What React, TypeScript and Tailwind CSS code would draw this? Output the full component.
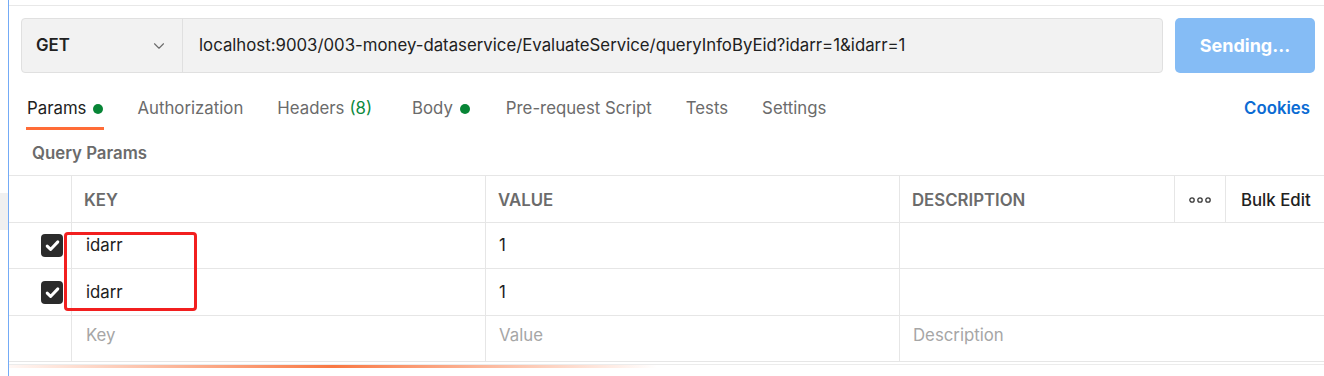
import { ChevronDown } from "lucide-react";

const font = { fontFamily: "Inter, 'Noto Sans', sans-serif" };

const tabs = [
  { label: "Params", dot: true, active: true, pad: "" },
  { label: "Authorization", pad: "" },
  { label: "Headers", count: "(8)", pad: "pr-[6px]" },
  { label: "Body", dot: true, pad: "pr-[2px]" },
  { label: "Pre-request Script", pad: "" },
  { label: "Tests", pad: "" },
  { label: "Settings", pad: "" }
];

const rows = [
  { key: "idarr", value: "1", on: true, h: "h-[46px]" },
  { key: "idarr", value: "1", on: true, h: "h-[47px]" }
];

const cols = "grid grid-cols-[63px_414px_414px_275px_51px_1fr]";

function Check() {
  return (
    <div className="grid h-[23px] w-[22px] place-items-center rounded-[4px] bg-[#2b2b2b]">
      <svg viewBox="0 0 16 16" className="h-[17px] w-[17px]" fill="none" stroke="white" strokeWidth="2.8" strokeLinecap="round" strokeLinejoin="round">
        <path d="M3 8.6l3.2 3.1L13 4.6" />
      </svg>
    </div>
  );
}

export default function App() {
  return (
    <div className="flex h-[376px] w-[1324px] overflow-hidden bg-white text-[16.8px] text-[#212121]" style={font}>
      <div className="w-[8px] shrink-0 pt-[193px]">
        <div className="h-[37px] bg-[#f0f0f0]" />
      </div>
      <main className="relative flex-1 border-l border-[#74abf6]">
        <div className="h-[5px]" />
        <div className="border-t border-[#e8e8e8] pl-3 pr-[9px] pt-[12px]">
          <div className="flex h-[55px] gap-3">
            <div className="flex flex-1 rounded-[4px] border border-[#e0e0e0] bg-[#f2f2f2]">
              <div className="flex w-[161px] items-center justify-between border-r border-[#e0e0e0] pl-[14px] pr-[14px]">
                <span className="font-semibold">GET</span>
                <ChevronDown className="h-[18px] w-[18px] text-[#6b6b6b]" strokeWidth={1.5} />
              </div>
              <div className="flex items-center pl-[16px]">localhost:9003/003-money-dataservice/EvaluateService/queryInfoByEid?idarr=1&amp;idarr=1</div>
            </div>
            <div className="grid w-[140px] place-items-center rounded-[5px] bg-[#85bcf5] text-[18px] font-bold text-white">Sending...</div>
          </div>
        </div>

        <div className="flex h-[57px] items-start justify-between pl-[18px] pr-[14px]">
          <div className="flex h-full items-start gap-[34px]">
            {tabs.map((t) => (
              <div key={t.label} className={`relative flex h-full items-start pt-[23px] leading-[25px] ${t.pad}`}>
                <span className={t.active ? "text-[#212121]" : "text-[#6b6b6b]"}>{t.label}</span>
                {t.count && <span className="ml-[5px] text-[#0b8a3d]">{t.count}</span>}
                {t.dot && <span className="ml-[7px] mt-[8px] h-[10px] w-[10px] rounded-full bg-[#078536]" />}
                {t.active && <span className="absolute left-[-1px] right-[-1px] top-[54px] h-[3px] bg-[#ff6c37]" />}
              </div>
            ))}
          </div>
          <span className="pt-[23px] font-semibold leading-[25px] text-[#0b6bd3]">Cookies</span>
        </div>

        <div className="flex h-[45px] items-center pl-[23px] pt-[2px] font-semibold text-[#6b6b6b]">Query Params</div>

        <div className="border-t border-[#e6e6e6]">
          <div className={`${cols} h-[47px] border-b border-[#e6e6e6] font-semibold text-[#6b6b6b]`}>
            <div className="border-r border-[#e6e6e6]" />
            <div className="flex items-center border-r border-[#e6e6e6] pl-[12px] pt-[3px]">KEY</div>
            <div className="flex items-center border-r border-[#e6e6e6] pl-[12px] pt-[3px]">VALUE</div>
            <div className="flex items-center border-r border-[#e6e6e6] pl-[12px] pt-[3px]">DESCRIPTION</div>
            <div className="flex items-center justify-center border-r border-[#e6e6e6] pt-[2px]">
              <svg viewBox="0 0 22 6" className="h-[6px] w-[22px]" fill="none" stroke="#3a3a3a" strokeWidth="1.3">
                <circle cx="3" cy="3" r="2.2" />
                <circle cx="11" cy="3" r="2.2" />
                <circle cx="19" cy="3" r="2.2" />
              </svg>
            </div>
            <div className="flex items-center pl-[15px] pt-[3px] font-medium text-[#212121]">Bulk Edit</div>
          </div>
          {rows.map((r, i) => (
            <div key={i} className={`${cols} ${r.h} border-b border-[#e6e6e6]`}>
              <div className="flex items-center justify-end border-r border-[#e6e6e6] pr-[8px]">
                <Check />
              </div>
              <div className="flex items-center border-r border-[#e6e6e6] pl-[14px] pt-[1px]">{r.key}</div>
              <div className="flex items-center border-r border-[#e6e6e6] pl-[13px] pt-[1px]">{r.value}</div>
              <div />
              <div />
              <div />
            </div>
          ))}
          <div className={`${cols} h-[46px] border-b border-[#e6e6e6] text-[#a6a6a6]`}>
            <div className="border-r border-[#e6e6e6]" />
            <div className="flex items-center border-r border-[#e6e6e6] pb-[6px] pl-[14px]">Key</div>
            <div className="flex items-center border-r border-[#e6e6e6] pb-[6px] pl-[13px]">Value</div>
            <div className="flex items-center pb-[6px] pl-[13px]">Description</div>
            <div />
            <div />
          </div>
        </div>
        <div className="mt-[2px] border-t border-[#ececec]">
          <div className="h-[3px] w-[648px] bg-[linear-gradient(90deg,rgba(255,108,55,0.05)_0%,#f97843_50%,rgba(255,108,55,0)_100%)]" />
        </div>

        <div className="pointer-events-none absolute left-[55px] top-[232px] h-[79px] w-[133px] rounded-[4px] border-[3px] border-[#f21f1f]" />
      </main>
    </div>
  );
}
